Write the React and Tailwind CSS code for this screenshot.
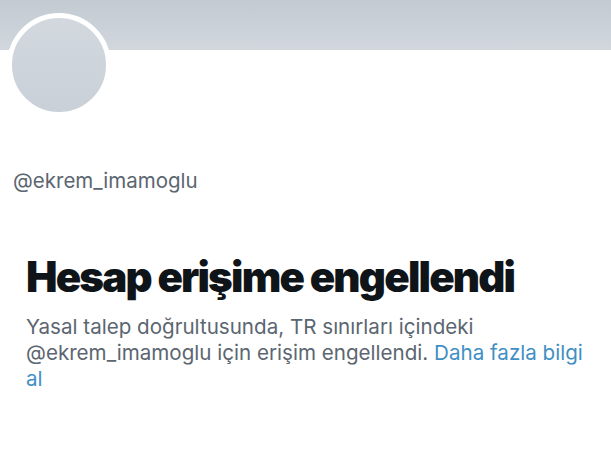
export default function App() {
  return (
    <div className="min-h-screen w-[611px] bg-white" style={{ fontFamily: 'Inter, "Noto Sans", sans-serif' }}>
      <div className="h-[50px] bg-gradient-to-b from-[#c3cad1] to-[#d1d7dd]" />
      <div className="ml-[7px] -mt-[37px] h-[104px] w-[104px] rounded-full border-[5px] border-white bg-gradient-to-b from-[#d2d8de] to-[#c9d0d7]" />

      <div className="mt-[51px] pl-[13px] text-[20.5px] leading-[25px] text-[#5b6670]">@ekrem_imamoglu</div>

      <div className="mt-[60px] pl-[26px] pr-[16px]">
        <h1 className="text-[42px] font-black leading-[48px] tracking-[-1.8px] text-[#0f1419]">
          Hesap erişime engellendi
        </h1>
        <p className="mt-[13px] text-[20.6px] leading-[26px] text-[#5b6670]">
          Yasal talep doğrultusunda, TR sınırları içindeki @ekrem_imamoglu için erişim engellendi.{' '}
          <a href="#" className="text-[#3f8fc4]">Daha fazla bilgi al</a>
        </p>
      </div>
    </div>
  );
}
